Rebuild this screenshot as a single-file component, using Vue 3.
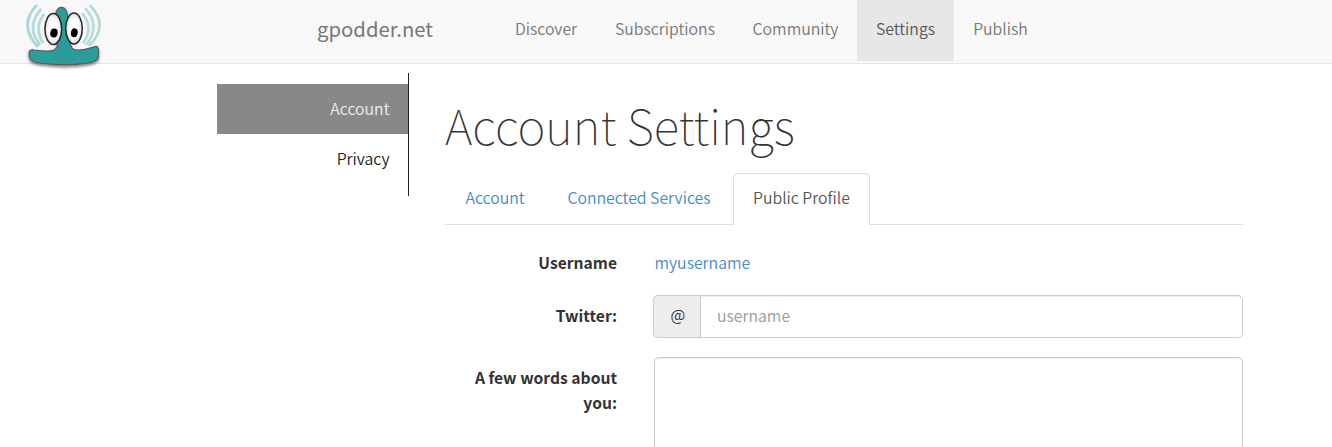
<script setup>
const nav = [
  { label: 'Discover', w: 100 },
  { label: 'Subscriptions', w: 138 },
  { label: 'Community', w: 123 },
  { label: 'Settings', w: 97, active: true },
  { label: 'Publish', w: 93 }
]
</script>

<template>
  <div class="page">
    <header class="navbar">
      <svg class="logo" width="88" height="74" viewBox="0 0 88 74">
        <defs>
          <filter id="shade" x="-20%" y="-20%" width="140%" height="160%">
            <feDropShadow dx="0" dy="2" stdDeviation="1.6" flood-color="#000" flood-opacity=".5" />
          </filter>
          <radialGradient id="eye">
            <stop offset=".55" stop-color="#fff" />
            <stop offset="1" stop-color="#dedede" />
          </radialGradient>
          <filter id="soft"><feGaussianBlur stdDeviation=".6" /></filter>
        </defs>
        <g fill="none" stroke="#2a9d9a" stroke-width="2.8" filter="url(#soft)">
          <path d="M21 5Q1.500 25 22 47" opacity=".36" />
          <path d="M25 9Q9.500 27 24 45" opacity=".34" />
          <path d="M28 14Q17.500 28 27 43" opacity=".34" />
          <path d="M73.500 5Q94 25 73 46" opacity=".32" />
          <path d="M69 8Q85.500 26 70 45" opacity=".3" />
          <path d="M66 13Q78.500 28 67 43" opacity=".3" />
        </g>
        <path d="M39.500 16C39.500 4.500 51.500 4.500 51.500 16L54 42C55 49 57 50 63 50C70 50 74 48 79 46.500C82 46 82.500 48 82.500 51V56C82.500 60 78 62 72 63C56 65.500 37 65 23 63C16 62 14 60 13.500 57L13 53C13 50 15 49.500 18 50C25 51 34 52 38 50C41.500 48 42.500 46 40 42Z" fill="#2a9d9a" stroke="#5d5265" stroke-width="1.100" filter="url(#shade)" />
        <ellipse cx="37.300" cy="29" rx="8.400" ry="15.500" fill="url(#eye)" stroke="#242424" stroke-width="1.500" />
        <ellipse cx="58" cy="28.500" rx="8.300" ry="15.500" fill="url(#eye)" stroke="#242424" stroke-width="1.500" />
        <ellipse cx="38" cy="33" rx="3.700" ry="4.500" transform="rotate(12 38 33)" />
        <ellipse cx="58.300" cy="32.800" rx="3.400" ry="4.500" transform="rotate(12 58.300 32.800)" />
      </svg>
      <a class="brand">gpodder.net</a>
      <nav class="menu">
        <a v-for="n in nav" :key="n.label" :class="{ active: n.active }" :style="{ width: n.w + 'px' }">{{ n.label }}</a>
      </nav>
    </header>
    <main class="body">
      <aside class="side">
        <a class="active">Account</a>
        <a>Privacy</a>
      </aside>
      <section class="content">
        <h1>Account Settings</h1>
        <div class="tabs">
          <a class="t1">Account</a>
          <a class="t2">Connected Services</a>
          <a class="t3 active">Public Profile</a>
        </div>
        <div class="row user">
          <label>Username</label>
          <a class="link">myusername</a>
        </div>
        <div class="row twitter">
          <label>Twitter:</label>
          <div class="group">
            <span class="addon">@</span>
            <input type="text" placeholder="username">
          </div>
        </div>
        <div class="row about">
          <label>A few words about you:</label>
          <textarea></textarea>
        </div>
      </section>
    </main>
  </div>
</template>

<style>
body { margin: 0; background: #fff; overflow: hidden; }
</style>

<style scoped>
* { box-sizing: border-box; }
.page {
  height: 447px;
  overflow: hidden;
  font: 350 15.8px/25px "Noto Sans CJK SC", "Open Sans", sans-serif;
  color: #333;
}
.navbar {
  position: relative;
  display: flex;
  height: 64px;
  background: #f8f8f8;
  border-bottom: 1px solid #e7e7e7;
  color: #777;
}
.logo { position: absolute; left: 16px; top: 0; }
.brand { width: 179px; margin-left: 317px; font-size: 20.3px; font-weight: 400; line-height: 57px; }
.menu { display: flex; height: 61px; }
.menu a { text-align: center; line-height: 58px; white-space: nowrap; }
.menu .active { background: #e7e7e7; color: #555; }
.body { display: flex; }
.side {
  width: 192px;
  height: 123px;
  margin: 9px 0 0 217px;
  padding-top: 11px;
  border-right: 1px solid #222;
}
.side a {
  display: block;
  height: 50px;
  padding-right: 18.5px;
  line-height: 50px;
  text-align: right;
  color: #222;
}
.side .active { background: #888; color: #eee; }
.content { width: 798px; margin-left: 36px; }
h1 {
  height: 109px;
  margin: 0;
  padding-top: 31px;
  font-size: 47.6px;
  font-weight: 100;
  line-height: 60px;
  white-space: nowrap;
}
.tabs { display: flex; height: 52px; border-bottom: 1px solid #ddd; color: #428bca; }
.tabs a { height: 52px; line-height: 50px; text-align: center; white-space: nowrap; }
.t1 { width: 100px; margin-right: 2px; }
.t2 { width: 184px; margin-right: 2px; }
.t3 { width: 137px; }
.tabs .active {
  border: 1px solid #ddd;
  border-bottom-color: #fff;
  border-radius: 5px 5px 0 0;
  background: #fff;
  color: #555;
  line-height: 48px;
}
.row { display: flex; }
label { width: 172px; flex: none; text-align: right; font-weight: 700; font-size: 15.65px; }
.user { height: 70px; padding-top: 25px; }
.link { margin-left: 37.5px; color: #428bca; }
.twitter { height: 62px; }
.twitter label { padding-top: 8px; }
.group { display: flex; width: 590px; height: 43px; margin-left: 36px; }
.addon {
  width: 47px;
  border: 1px solid #ccc;
  border-right: 0;
  border-radius: 5px 0 0 5px;
  background: #eee;
  line-height: 38px;
  padding-left: 2px;
  text-align: center;
}
input, textarea {
  border: 1px solid #ccc;
  outline: 0;
  background: #fff;
  box-shadow: inset 0 1px 1px rgba(0, 0, 0, .075);
  font: inherit;
  margin: 0;
}
input { width: 543px; padding: 0 16px 2px; border-radius: 0 5px 5px 0; }
input::placeholder { color: #999; opacity: 1; }
textarea { width: 589px; height: 120px; margin-left: 37px; border-radius: 5px; resize: none; }
.about label { padding-top: 8px; padding-left: 20px; }
</style>
